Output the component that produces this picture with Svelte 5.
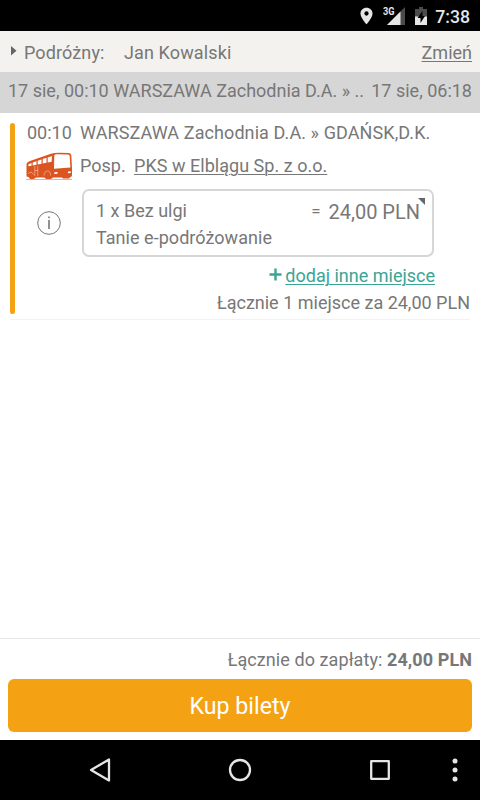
<script>
	const passenger = 'Jan Kowalski';
	const total = '24,00 PLN';

	const journey = {
		start: '17 sie, 00:10 WARSZAWA Zachodnia D.A. » ..',
		end: '17 sie, 06:18',
	};

	const segment = {
		time: '00:10',
		route: 'WARSZAWA Zachodnia D.A. » GDAŃSK,D.K.',
		kind: 'Posp.',
		carrier: 'PKS w Elblągu Sp. z o.o.',
	};
</script>

<main>
	<div class="status">
		<svg class="pin" width="13" height="18" viewBox="0 0 14 18">
			<path fill="#e6e6e6" fill-rule="evenodd" d="M7 0C3.200 0 .5 2.700 .5 6.300C.5 10.800 7 18 7 18S13.500 10.800 13.500 6.300C13.500 2.700 10.800 0 7 0ZM7 4a2.300 2.300 0 1 1 0 4.600a2.300 2.300 0 0 1 0-4.600Z" />
		</svg>
		<svg class="signal" width="23" height="19" viewBox="0 0 23 19">
			<path fill="#4b4b4b" d="M22 1V19H4Z" />
			<path fill="#e6e6e6" d="M17.500 5.500V19H4Z" />
			<path fill="#000" d="M0 0H12V10H0Z" />
			<text x="0" y="9" textLength="11.500" lengthAdjust="spacingAndGlyphs">3G</text>
		</svg>
		<svg class="battery" width="12" height="18" viewBox="0 0 12 18">
			<path fill="#4b4b4b" d="M4 0h4v2h4v8H0V2h4Z" />
			<path fill="#e6e6e6" d="M0 9.500h12V18H0Z" />
			<path fill="#000" d="M7.500 4L2.500 11H5.500V16L10 9H7.500Z" />
		</svg>
		<span class="clock">7:38</span>
	</div>

	<div class="passenger">
		<svg class="caret" width="6" height="10" viewBox="0 0 6 10"><path fill="#666" d="M0 0L5.500 4.800L0 9.500Z" /></svg>
		<span class="label">Podróżny:</span>
		<span class="name">{passenger}</span>
		<a class="change" href="#change">Zmień</a>
	</div>

	<div class="journey">
		<span class="from">{journey.start}</span>
		<span class="to">{journey.end}</span>
	</div>

	<section class="trip">
		<div class="bar"></div>
		<div class="details">
			<div class="route">
				<span class="time">{segment.time}</span>
				<span class="stops">{segment.route}</span>
			</div>
			<div class="carrier">
				<svg class="bus" width="47" height="28" viewBox="0 0 47 28">
					<path fill="#dc5420" d="M.5 12Q1 10 4 9L25 1.800Q28 .8 33 .8L43 1Q45 1.200 45.300 3.500L46 16V23Q46 24.800 44.500 25L43 26.500H37L36 25.500H27L25 27H20L18.500 25.500H10L8 27H4L2.500 25L.5 24.500Z" />
					<path fill="#fff" d="M28.300 3.600Q28.400 2.400 30 2.300L42.200 2.500Q43.500 2.600 43.700 4L44.400 15.600L28 16.800Z" />
					<path fill="#fff" d="M2.500 12.200L5.500 11V13.700L2.300 14.200ZM6.700 10.500L10.500 9.200V12.700L6.700 13.400ZM11.700 8.800L15.500 7.500V11.700L11.700 12.400ZM16.700 7.100L20.500 5.800V10.700L16.700 11.400ZM21.700 5.400L26 3.900L25.600 9.800L21.700 10.500Z" />
					<path fill="none" stroke="#fff" stroke-width=".6" opacity=".7" d="M8.800 14V24M11.800 14V24M9 18.500H12M2 22Q5 18 7.500 22.500M18 23.500Q18.500 19 21.500 19Q24.500 19 24.500 23.500" />
					<path fill="#fff" d="M28.300 20.300L31.500 20V21.800L28.300 22ZM42 19.500L44.800 19.200V21L42 21.300Z" />
					<path stroke="#dc5420" stroke-width=".8" opacity=".65" d="M0 27.400H46" />
				</svg>
				<span class="kind">{segment.kind}</span>
				<a class="company" href="#carrier">{segment.carrier}</a>
			</div>
			<div class="fare">
				<svg class="info" width="24" height="24" viewBox="0 0 24 24">
					<circle cx="12" cy="12" r="11.300" fill="none" stroke="#777" stroke-width="1" />
					<path fill="none" stroke="#777" stroke-width="1.600" d="M12 9V18M12 5.500V7.300" />
				</svg>
				<div class="ticket">
					<div class="price-row">
						<span class="count">1 x Bez ulgi</span>
						<span class="equals">=</span>
						<span class="price">{total}</span>
						<svg class="corner" width="7" height="7" viewBox="0 0 7 7"><path fill="#666" d="M0 0H7V7Z" /></svg>
					</div>
					<div class="offer">Tanie e-podróżowanie</div>
				</div>
			</div>
			<div class="add">
				<svg class="plus" width="13" height="13" viewBox="0 0 13 13"><path stroke="#3ba595" stroke-width="2.400" d="M6.500 .5V12.500M.5 6.500H12.500" /></svg>
				<a href="#add">dodaj inne miejsce</a>
			</div>
			<div class="sum"><span>Łącznie 1 miejsce za {total}</span></div>
		</div>
	</section>

	<footer>
		<div class="total"><span>Łącznie do zapłaty: <b>{total}</b></span></div>
		<button>Kup bilety</button>
	</footer>

	<nav>
		<svg width="480" height="60" viewBox="0 0 480 60" fill="none" stroke="#e6e6e6" stroke-width="2.300" stroke-linejoin="round">
			<path d="M109 19.500V40.500L91 30Z" />
			<circle cx="240" cy="30" r="10" />
			<rect x="371.200" y="21.200" width="17.600" height="17.600" />
			<g fill="#e6e6e6" stroke="none">
				<circle cx="455" cy="21" r="2.500" />
				<circle cx="455" cy="30" r="2.500" />
				<circle cx="455" cy="39" r="2.500" />
			</g>
		</svg>
	</nav>
</main>

<style>
	main {
		display: flex;
		flex-direction: column;
		width: 480px;
		height: 800px;
		background: #fff;
		color: #777;
		font-family: Roboto, sans-serif;
		font-size: 18px;
		white-space: nowrap;
		overflow: hidden;
	}

	a {
		color: inherit;
		text-decoration: underline;
		text-decoration-thickness: 1px;
		text-underline-offset: 2px;
	}

	svg {
		display: block;
		flex: none;
	}

	.status {
		display: flex;
		align-items: center;
		justify-content: flex-end;
		height: 31px;
		padding-right: 10px;
		box-sizing: border-box;
		background: #000;
	}

	.signal {
		margin-left: 10px;
	}

	.signal text {
		fill: #e6e6e6;
		font-size: 10.500px;
		font-weight: 700;
	}

	.battery {
		margin-left: 9px;
	}

	.clock {
		margin-left: 8px;
		padding-top: 2px;
		color: #e6e6e6;
		font-size: 17.700px;
		font-weight: 500;
	}

	.passenger {
		display: flex;
		height: 41px;
		padding: 0 8px 0 11px;
		background: #f4f2ee;
		letter-spacing: 0.120px;
		line-height: 43px;
	}

	.caret {
		margin-top: 15px;
	}

	.label {
		width: 100px;
		margin-left: 7px;
	}

	.change {
		margin-left: auto;
		letter-spacing: 0;
	}

	.journey {
		display: flex;
		justify-content: space-between;
		height: 41px;
		padding: 0 8px;
		background: #d6d6d6;
		line-height: 38px;
	}

	.trip {
		display: flex;
		height: 196px;
		margin: 10px 10px 0;
		border-bottom: 1px solid #f2f2f2;
	}

	.bar {
		width: 5px;
		height: 191px;
		border-radius: 2.500px;
		background: #f4a213;
	}

	.details {
		flex: 1;
	}

	.route {
		display: flex;
		height: 20px;
		margin-left: 12px;
		line-height: 20px;
	}

	.time {
		width: 53px;
	}

	.stops {
		letter-spacing: 0.090px;
	}

	.carrier {
		display: flex;
		height: 30px;
		margin: 8px 0 0 11px;
		line-height: 30px;
	}

	.bus {
		margin-top: 1px;
	}

	.kind {
		width: 54px;
		margin-left: 7px;
	}

	.company {
		letter-spacing: 0.030px;
	}

	.fare {
		display: flex;
		align-items: center;
		margin: 8px 0 0 22px;
	}

	.ticket {
		width: 352px;
		height: 68px;
		margin-left: 21px;
		padding: 7px 7px 0 12px;
		box-sizing: border-box;
		border: 2px solid #d6d6d6;
		border-radius: 7px;
	}

	.price-row {
		display: flex;
		height: 27px;
		line-height: 26px;
	}

	.equals {
		margin-left: auto;
		font-size: 17px;
	}

	.price {
		margin-left: 8px;
		padding-top: 1px;
		font-size: 20px;
	}

	.corner {
		margin-left: -2px;
	}

	.offer {
		letter-spacing: 0.040px;
		line-height: 26px;
	}

	.add {
		display: flex;
		justify-content: flex-end;
		margin-top: 5px;
		padding-right: 35px;
		color: #3ba595;
		line-height: 27px;
	}

	.plus {
		margin: 6px 3px 0 0;
	}

	.sum {
		text-align: right;
		line-height: 27px;
	}

	footer {
		height: 102px;
		margin-top: auto;
		padding: 0 8px;
		box-sizing: border-box;
		border-top: 1px solid #e8e8ea;
	}

	.total {
		height: 40px;
		letter-spacing: 0.080px;
		text-align: right;
		line-height: 42px;
	}

	button {
		display: block;
		width: 100%;
		height: 53px;
		padding: 0;
		border: 0;
		border-radius: 6px;
		background: #f4a213;
		color: #fff;
		font-family: inherit;
		font-size: 23.200px;
	}

	nav {
		height: 60px;
		background: #000;
	}
</style>
